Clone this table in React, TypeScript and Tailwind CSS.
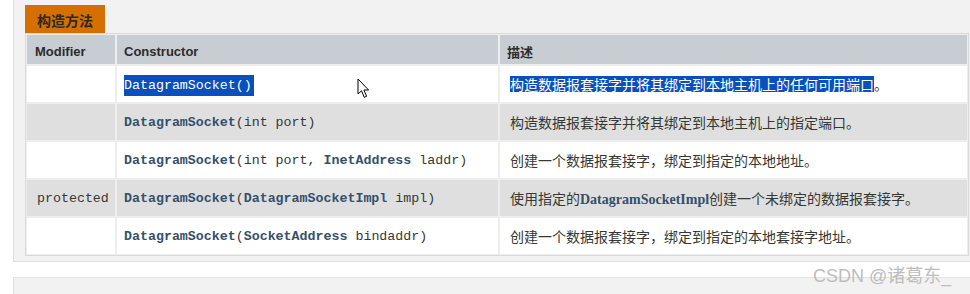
import React from 'react'

type Row = {
  mod: string
  code: React.ReactNode
  desc: React.ReactNode
  alt: boolean
}

const Link = ({ children }: { children: React.ReactNode }) => (
  <span className="font-bold text-[#34506b]">{children}</span>
)

const rows: Row[] = [
  {
    mod: '',
    alt: false,
    code: (
      <span className="inline-block h-[21px] bg-[#0a50bd] pr-[2px] leading-[21px] text-white">
        DatagramSocket()
      </span>
    ),
    desc: (
      <>
        <span className="inline-block h-[16px] bg-[#0a50bd] leading-[16px] text-white">
          构造数据报套接字并将其绑定到本地主机上的任何可用端口
        </span>
        。
      </>
    ),
  },
  {
    mod: '',
    alt: true,
    code: (
      <>
        <Link>DatagramSocket</Link>(int port)
      </>
    ),
    desc: '构造数据报套接字并将其绑定到本地主机上的指定端口。',
  },
  {
    mod: '',
    alt: false,
    code: (
      <>
        <Link>DatagramSocket</Link>(int port, <Link>InetAddress</Link> laddr)
      </>
    ),
    desc: '创建一个数据报套接字，绑定到指定的本地地址。',
  },
  {
    mod: 'protected',
    alt: true,
    code: (
      <>
        <Link>DatagramSocket</Link>(<Link>DatagramSocketImpl</Link> impl)
      </>
    ),
    desc: (
      <>
        使用指定的
        <span className="font-['Liberation_Serif',serif] font-bold text-[#34506b]">DatagramSocketImpl</span>
        创建一个未绑定的数据报套接字。
      </>
    ),
  },
  {
    mod: '',
    alt: false,
    code: (
      <>
        <Link>DatagramSocket</Link>(<Link>SocketAddress</Link> bindaddr)
      </>
    ),
    desc: '创建一个数据报套接字，绑定到指定的本地套接字地址。',
  },
]

function Cursor() {
  return (
    <svg
      className="absolute left-[357px] top-[78px]"
      width="14"
      height="21"
      viewBox="0 0 14 21"
      aria-hidden
    >
      <path
        d="M1 1 L1 16 L4.5 12.8 L7.3 19.3 L9.6 18.3 L6.9 12 L11.6 12 Z"
        fill="#fff"
        stroke="#000"
        strokeWidth="1"
        strokeLinejoin="round"
      />
    </svg>
  )
}

export default function App() {
  return (
    <div className="relative h-[294px] w-[970px] overflow-hidden bg-white font-['Liberation_Sans','Noto_Sans_CJK_SC',sans-serif] text-[#353833]">
      <div className="ml-[13px] w-[980px] border-x border-b border-[#e2e2e2] bg-[#f2f2f2] pb-[5px] pl-[11px] pt-[5px]">
        <div className="flex h-[28px] w-[80px] items-center bg-[#d56f00] pl-[12px] pt-[2px] font-['Noto_Sans_CJK_SC',sans-serif] text-[14px] font-bold text-[#2a2a2a]">
          构造方法
        </div>
        <div className="grid w-[944px] grid-cols-[88px_381px_1fr] gap-[2px] border border-[#dadada] bg-[#eeeeee] p-[1px]">
          <div className="flex h-[29px] items-center bg-[#c7cdd3] pl-[8px] pt-[5px] text-[13px] font-bold text-[#2b2b2b]">
            Modifier
          </div>
          <div className="flex h-[29px] items-center bg-[#c7cdd3] pl-[7px] pt-[5px] text-[13px] font-bold text-[#2b2b2b]">
            Constructor
          </div>
          <div className="flex h-[29px] items-center bg-[#c7cdd3] pl-[7px] pt-[5px] font-['Noto_Sans_CJK_SC',sans-serif] text-[13px] font-bold text-[#2b2b2b]">
            描述
          </div>
          {rows.map((r, i) => {
            const bg = r.alt ? 'bg-[#dfdfdf]' : 'bg-white'
            return (
              <React.Fragment key={i}>
                <div
                  className={`flex h-[36px] items-center pl-[10px] pt-[2px] font-['Liberation_Mono',monospace] text-[13.3px] text-[#353833] ${bg}`}
                >
                  {r.mod}
                </div>
                <div
                  className={`flex h-[36px] items-center whitespace-pre pl-[7px] pt-[2px] font-['Liberation_Mono',monospace] text-[13.3px] text-[#353833] ${bg}`}
                >
                  <span>{r.code}</span>
                </div>
                <div
                  className={`flex h-[36px] items-center pl-[10px] pt-[1px] font-['Noto_Sans_CJK_SC',sans-serif] text-[14px] text-[#353833] ${bg}`}
                >
                  <span>{r.desc}</span>
                </div>
              </React.Fragment>
            )
          })}
        </div>
      </div>
      <div className="ml-[13px] mt-[15px] h-[40px] w-[980px] border border-[#e2e2e2] bg-[#f2f2f2]" />
      <Cursor />
      <div className="absolute left-[813px] top-[264px] font-['Liberation_Sans','Noto_Sans_CJK_SC',sans-serif] text-[18px] leading-[24px] text-[#bdbdbd]">
        CSDN @诸葛东_
      </div>
    </div>
  )
}
